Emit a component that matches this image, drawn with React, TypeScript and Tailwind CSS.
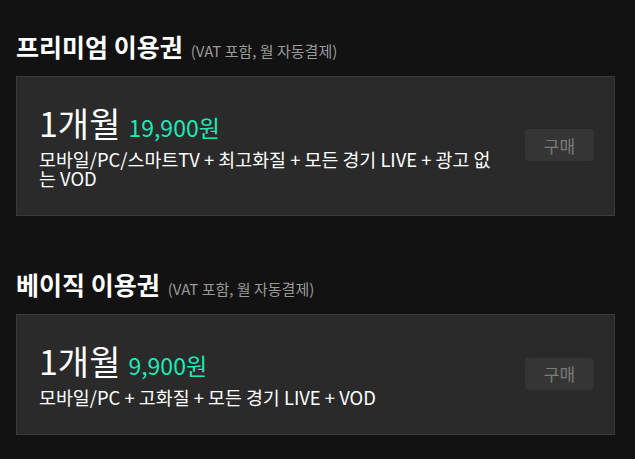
import React from 'react';

type Plan = {
  title: string;
  price: string;
  desc: string;
};

const plans: Plan[] = [
  { title: '프리미엄 이용권', price: '19,900원', desc: '모바일/PC/스마트TV + 최고화질 + 모든 경기 LIVE + 광고 없는 VOD' },
  { title: '베이직 이용권', price: '9,900원', desc: '모바일/PC + 고화질 + 모든 경기 LIVE + VOD' },
];

const PlanCard: React.FC<{ plan: Plan }> = ({ plan }) => (
  <section>
    <h2 className="flex items-baseline gap-2 px-4">
      <span className="text-[25px] font-bold text-white">{plan.title}</span>
      <span className="text-[15px] text-[#9a9a9a]">(VAT 포함, 월 자동결제)</span>
    </h2>
    <div className="ml-4 mr-5 mt-2.5 flex items-center border border-[#3a3a3a] bg-[#2a2a2a] pb-[27px] pl-[22px] pr-5 pt-[26px]">
      <div className="w-[466px]">
        <div className="flex items-baseline gap-2">
          <span className="text-[34px] leading-10 text-white">1개월</span>
          <span className="text-[23px] text-[#1de9b6]">{plan.price}</span>
        </div>
        <p className="mt-1.5 break-all text-[18.4px] leading-[19px] text-white">{plan.desc}</p>
      </div>
      <button className="ml-auto h-8 w-[69px] rounded-sm bg-[#353535] text-[17px] text-[#7a7a7a]">구매</button>
    </div>
  </section>
);

export default function App() {
  return (
    <div
      className="min-h-[459px] bg-[#121212] pt-7"
      style={{ fontFamily: '"Noto Sans CJK KR", "Noto Sans", sans-serif' }}
    >
      <div className="flex flex-col gap-[50px]">
        {plans.map((p) => (
          <PlanCard key={p.title} plan={p} />
        ))}
      </div>
    </div>
  );
}
